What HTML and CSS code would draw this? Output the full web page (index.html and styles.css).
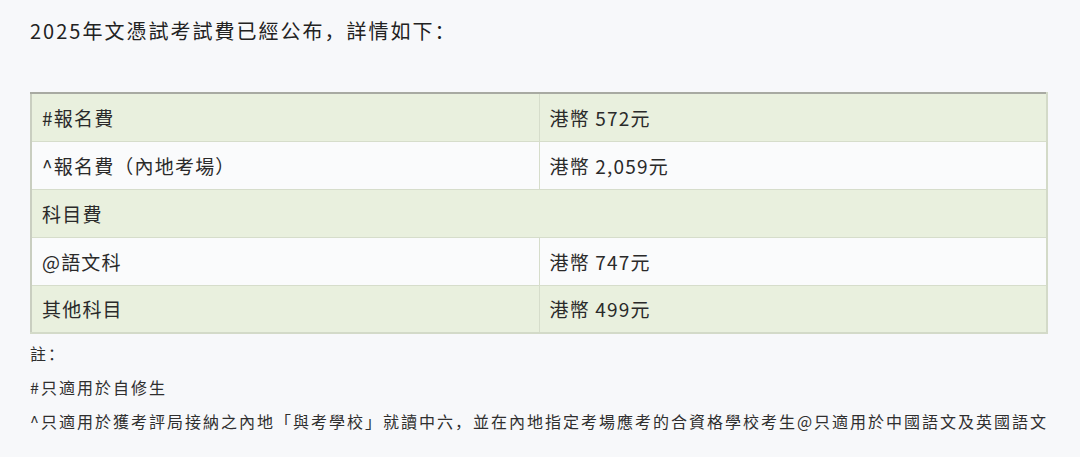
FILE: index.html
```html
<!DOCTYPE html>
<html lang="zh-Hans">
<head>
<meta charset="utf-8">
<link rel="stylesheet" href="styles.css">
</head>
<body>
<div class="page">
  <p class="title">2025年文憑試考試費已經公布，詳情如下：</p>
  <table class="fees">
    <tr class="alt"><td>#報名費</td><td>港幣 572元</td></tr>
    <tr><td>^報名費（內地考場）</td><td>港幣 2,059元</td></tr>
    <tr class="alt"><td colspan="2">科目費</td></tr>
    <tr><td>@語文科</td><td>港幣 747元</td></tr>
    <tr class="alt"><td>其他科目</td><td>港幣 499元</td></tr>
  </table>
  <div class="notes">
    <p>註：</p>
    <p>#只適用於自修生</p>
    <p>^只適用於獲考評局接納之內地「與考學校」就讀中六，並在內地指定考場應考的合資格學校考生@只適用於中國語文及英國語文</p>
  </div>
</div>
</body>
</html>
```
FILE: styles.css
```css
body {
  margin: 0;
  background: #f7f8fa;
  font-family: "Noto Sans CJK SC", "Noto Sans CJK TC", "Noto Sans", sans-serif;
  color: #2a2a2a;
}
.page {
  padding: 16px 30px 0 30px;
}
.title {
  margin: 0;
  font-size: 20px;
  line-height: 30px;
  letter-spacing: 2px;
  color: #222;
}
.fees {
  margin-top: 46px;
  width: 1018px;
  border-collapse: collapse;
  table-layout: fixed;
  border: 2px solid #d3dac8;
  border-top-color: #a8aaa2;
  border-left-color: #c9cec0;
}
.fees tr {
  height: 48px;
  background: #fafbfc;
}
.fees tr.alt {
  background: #e9f0de;
}
.fees td {
  padding: 0 10px;
  font-size: 19px;
  letter-spacing: 1.2px;
  border: 1px solid #d6ddcb;
  vertical-align: middle;
}
.notes {
  margin-top: 2px;
}
.notes p {
  margin: 0;
  font-size: 16px;
  line-height: 34px;
  letter-spacing: 2px;
  color: #2f2f2f;
}
```
